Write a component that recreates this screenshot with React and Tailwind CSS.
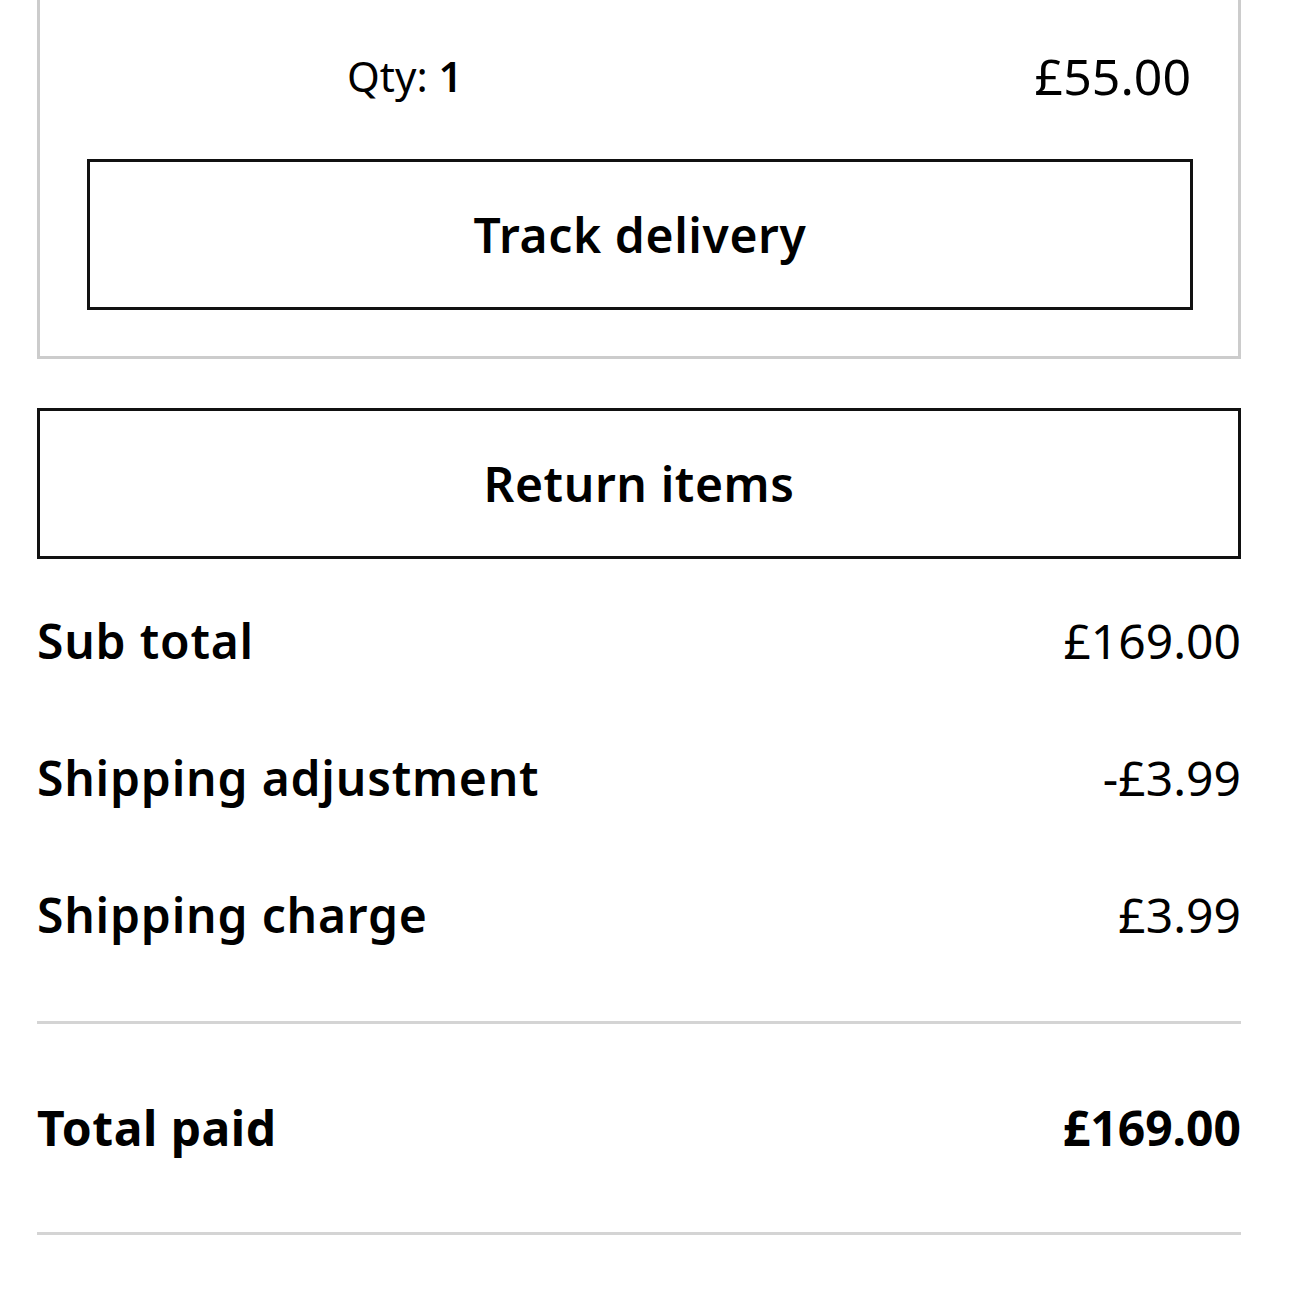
export default function App() {
  const font = { fontFamily: '"Noto Sans", "Open Sans", sans-serif' };
  return (
    <div className="min-h-[1289px] w-full bg-white text-black" style={font}>
      <div className="ml-[37px] w-[1204px]">
        <div className="border-x-[3px] border-b-[3px] border-[#cccccc] pl-[47px] pr-[45px] pb-[46px]">
          <div className="flex h-[159px] items-start pt-[48px]">
            <div className="w-[260px]" />
            <div className="flex flex-1 items-center justify-between pr-[2px]">
              <span className="text-[42px] leading-[56px]">Qty: <span className="font-semibold">1</span></span>
              <span className="text-[50px] leading-[56px]">£55.00</span>
            </div>
          </div>
          <button className="flex h-[151px] w-full items-center justify-center border-[3px] border-[#111111] text-[48px] font-semibold tracking-[0.6px]">
            Track delivery
          </button>
        </div>
        <button className="mt-[49px] flex h-[151px] w-full items-center justify-center border-[3px] border-[#111111] text-[48px] font-semibold tracking-[0.6px]">
          Return items
        </button>
        <div className="mt-[13px]">
          {[
            ['Sub total', '£169.00'],
            ['Shipping adjustment', '-£3.99'],
            ['Shipping charge', '£3.99'],
          ].map(([l, v]) => (
            <div key={l} className="flex h-[137px] items-center justify-between text-[48px]">
              <span className="font-semibold tracking-[0.8px]">{l}</span>
              <span>{v}</span>
            </div>
          ))}
        </div>
        <div className="mt-[38px] h-[3px] bg-[#d4d4d4]" />
        <div className="flex h-[208px] items-center justify-between text-[48px] font-bold">
          <span className="tracking-[0.5px]">Total paid</span>
          <span>£169.00</span>
        </div>
        <div className="h-[3px] bg-[#d4d4d4]" />
      </div>
    </div>
  );
}
